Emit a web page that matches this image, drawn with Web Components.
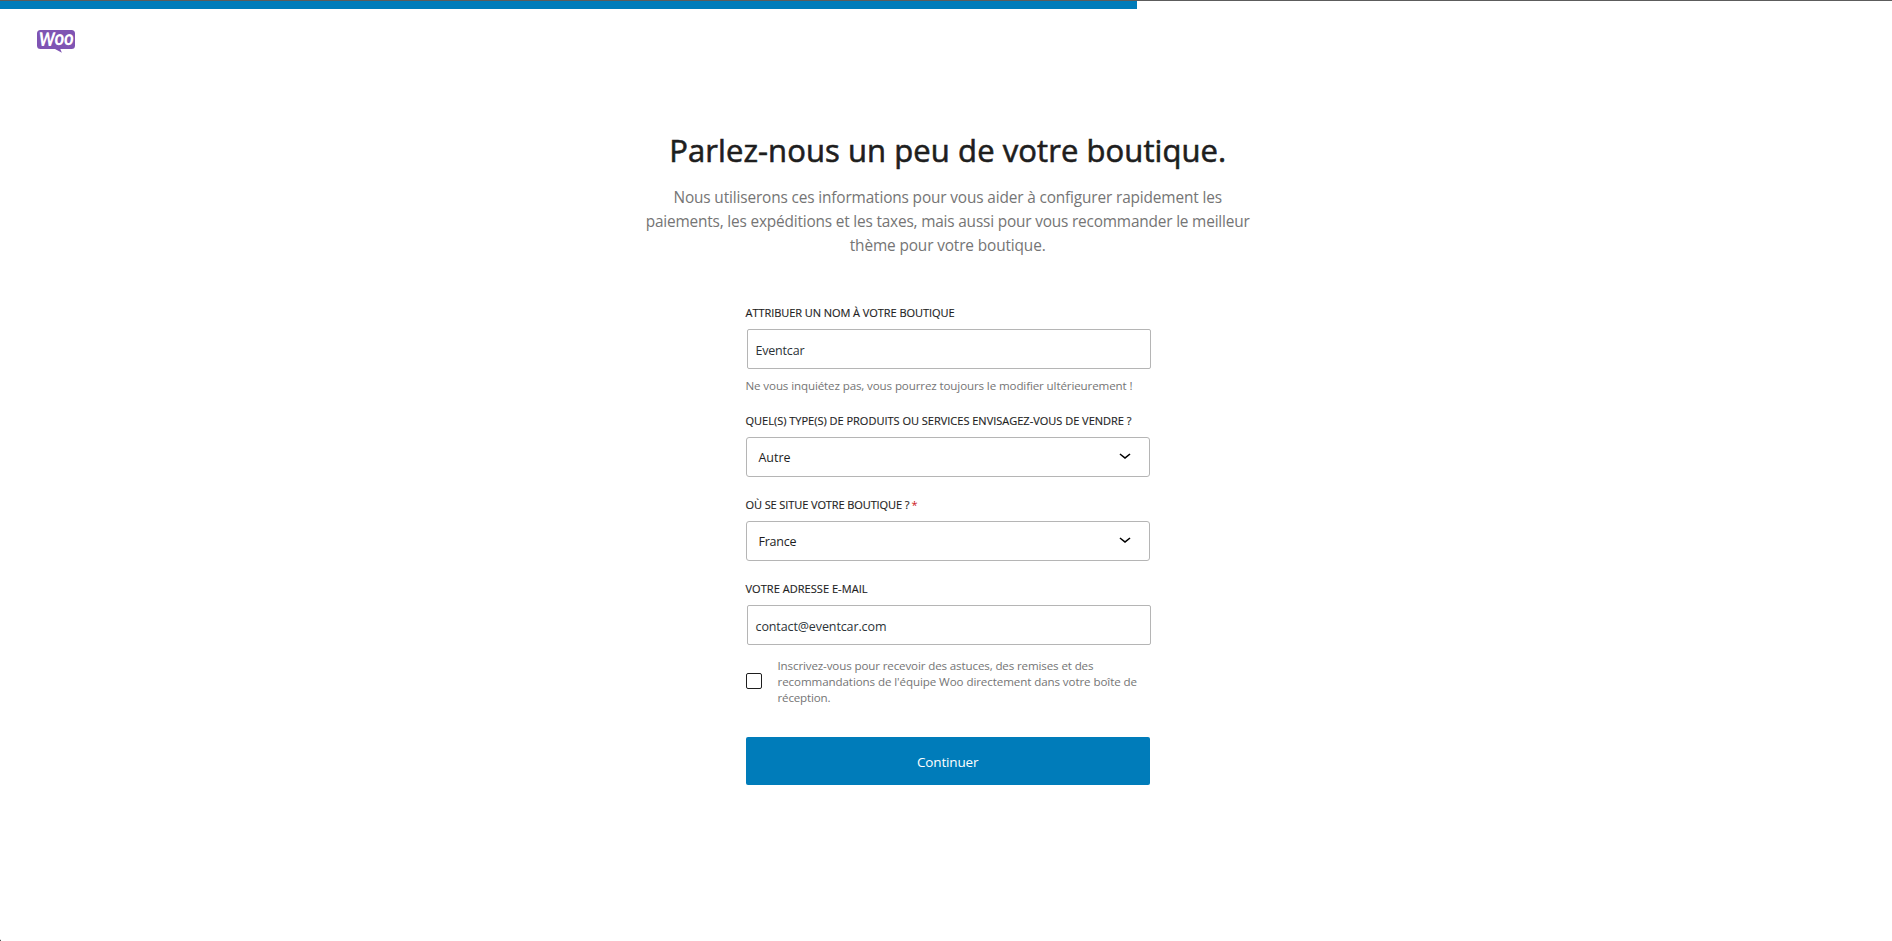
<!DOCTYPE html>
<html lang="fr">
<head>
<meta charset="utf-8">
<title>Configuration de la boutique</title>
<style>
html,body{margin:0;height:100%;background:#fff;overflow:hidden}
body{font-family:"Open Sans","Noto Sans",sans-serif;color:#1e1e1e}
</style>
</head>
<body>
<store-profiler></store-profiler>
<script>
// One line of text whose tracking is adjusted to a given width.
customElements.define('text-line', class extends HTMLElement {
  connectedCallback() {
    this.attachShadow({mode:'open'}).innerHTML =
      '<style>:host{display:block;white-space:nowrap;margin-left:-0.500px}span{display:inline-block}</style><span><slot></slot></span>';
    const span = this.shadowRoot.querySelector('span');
    const width = +this.getAttribute('w');
    if (width) {
      const n = this.textContent.length;
      const natural = span.getBoundingClientRect().width;
      span.style.letterSpacing = ((width - natural) / (n - 1)).toFixed(4) + 'px';
      span.style.marginRight = (-(width - natural) / (n - 1)).toFixed(4) + 'px';
    }
  }
});

customElements.define('progress-bar', class extends HTMLElement {
  connectedCallback() {
    this.attachShadow({mode:'open'}).innerHTML =
      '<style>:host{display:block;border-top:1px solid #5c5c5c;height:8px}div{height:8px;width:1137px;background:#007cba}</style><div></div>';
  }
});

customElements.define('woo-logo', class extends HTMLElement {
  connectedCallback() {
    this.attachShadow({mode:'open'}).innerHTML = `
      <style>:host{display:block;width:38px;height:23px}svg{display:block;overflow:visible}text{font-family:Lato,sans-serif;font-weight:900;fill:#fff}</style>
      <svg width="38" height="23" viewBox="0 0 38 23">
        <path fill="#7f54b3" d="M3.500 0h31A3.500 3.500 0 0 1 38 3.500v12a3.500 3.500 0 0 1-3.500 3.500H23.300l1.600 3.700L18 19H3.500A3.500 3.500 0 0 1 0 15.500v-12A3.500 3.500 0 0 1 3.500 0z"/>
        <g transform="translate(1.500 0) skewX(-6)">
          <text x="1.500" y="16.200" font-size="19" textLength="16" lengthAdjust="spacingAndGlyphs">W</text>
          <text x="17" y="15" font-size="21" textLength="19" lengthAdjust="spacingAndGlyphs">oo</text>
        </g>
      </svg>`;
  }
});

customElements.define('form-label', class extends HTMLElement {
  connectedCallback() {
    this.attachShadow({mode:'open'}).innerHTML =
      '<style>:host{display:flex;gap:2px;font-size:11px;-webkit-text-stroke:.15px;line-height:16px;height:16px;margin-bottom:8px;color:#1e1e1e}</style><slot></slot>';
  }
});

customElements.define('text-field', class extends HTMLElement {
  connectedCallback() {
    this.attachShadow({mode:'open'}).innerHTML =
      '<style>:host{display:block;box-sizing:border-box;width:404px;height:40px;margin-left:1px;border:1px solid #b5b5b5;border-radius:2px;padding:11px 8px 0;font-size:12.500px;line-height:20px;color:#2c3338}</style><slot></slot>';
  }
});

customElements.define('select-field', class extends HTMLElement {
  connectedCallback() {
    this.attachShadow({mode:'open'}).innerHTML = `
      <style>:host{display:flex;justify-content:space-between;box-sizing:border-box;width:404px;height:40px;border:1px solid #b5b5b5;border-radius:3px;padding:10px 12px 0;font-size:12.500px;line-height:20px;color:#1e1e1e}
      svg{display:block;margin-top:-5px}</style>
      <slot></slot>
      <svg width="24" height="24" viewBox="0 0 24 24"><path fill="#000" d="M17.500 11.600 12 16l-5.500-4.400.900-1.200L12 14l4.500-3.600z"/></svg>`;
  }
});

customElements.define('opt-in', class extends HTMLElement {
  connectedCallback() {
    this.attachShadow({mode:'open'}).innerHTML = `
      <style>:host{display:flex;align-items:center;gap:16px;font-size:11.600px;line-height:16px;color:#757575}
      i{box-sizing:border-box;width:16px;height:16px;border:1px solid #1e1e1e;border-radius:2px;margin-top:-2px}</style>
      <i></i><div><slot></slot></div>`;
  }
});

customElements.define('primary-button', class extends HTMLElement {
  connectedCallback() {
    this.attachShadow({mode:'open'}).innerHTML =
      '<style>:host{display:flex;align-items:center;justify-content:center;box-sizing:border-box;height:48px;background:#007cba;color:#fff;border-radius:2px;font-size:13.500px;line-height:20px;padding-top:1px}</style><slot></slot>';
  }
});

customElements.define('store-profiler', class extends HTMLElement {
  connectedCallback() {
    this.attachShadow({mode:'open'}).innerHTML = `
      <style>
        :host{display:flex;flex-direction:column;height:941px}
        woo-logo{margin:21px 0 0 37px}
        main{display:flex;flex-direction:column;align-items:center;padding:77px 0 0 4px}
        h1{margin:0;font-size:31px;font-weight:400;-webkit-text-stroke:.6px;line-height:40px;color:#1e1e1e}
        .intro{margin-top:16px;font-size:15.400px;line-height:24px;color:#757575;display:flex;flex-direction:column;align-items:center}
        form{width:404px;margin-top:47px}
        .help{margin-top:9px;font-size:11.600px;line-height:16px;color:#757575}
        section+section{margin-top:20px}
        .first+section{margin-top:19px}
        .req{color:#cc1818;-webkit-text-stroke:0}
        opt-in{margin-top:13px}
        primary-button{margin-top:31px}
        footer{margin-top:auto;width:1px;height:2px;background:linear-gradient(#ddd 50%,#555 50%)}
      </style>
      <progress-bar></progress-bar>
      <woo-logo></woo-logo>
      <main>
        <h1><text-line w="557">Parlez-nous un peu de votre boutique.</text-line></h1>
        <div class="intro">
          <text-line w="548.500">Nous utiliserons ces informations pour vous aider à configurer rapidement les</text-line>
          <text-line w="604">paiements, les expéditions et les taxes, mais aussi pour vous recommander le meilleur</text-line>
          <text-line w="196">thème pour votre boutique.</text-line>
        </div>
        <form>
          <section class="first">
            <form-label><text-line w="209">ATTRIBUER UN NOM À VOTRE BOUTIQUE</text-line></form-label>
            <text-field><text-line w="49">Eventcar</text-line></text-field>
            <div class="help"><text-line w="387">Ne vous inquiétez pas, vous pourrez toujours le modifier ultérieurement !</text-line></div>
          </section>
          <section>
            <form-label><text-line w="386">QUEL(S) TYPE(S) DE PRODUITS OU SERVICES ENVISAGEZ-VOUS DE VENDRE ?</text-line></form-label>
            <select-field><text-line w="32">Autre</text-line></select-field>
          </section>
          <section>
            <form-label><text-line w="164">OÙ SE SITUE VOTRE BOUTIQUE ?</text-line><span class="req">*</span></form-label>
            <select-field><text-line w="38">France</text-line></select-field>
          </section>
          <section>
            <form-label><text-line w="122">VOTRE ADRESSE E-MAIL</text-line></form-label>
            <text-field><text-line w="131">contact@eventcar.com</text-line></text-field>
          </section>
          <opt-in>
            <text-line w="316">Inscrivez-vous pour recevoir des astuces, des remises et des</text-line>
            <text-line w="359.500">recommandations de l'équipe Woo directement dans votre boîte de</text-line>
            <text-line w="53">réception.</text-line>
          </opt-in>
          <primary-button><text-line w="61.500">Continuer</text-line></primary-button>
        </form>
      </main>
      <footer></footer>`;
  }
});
</script>
</body>
</html>
